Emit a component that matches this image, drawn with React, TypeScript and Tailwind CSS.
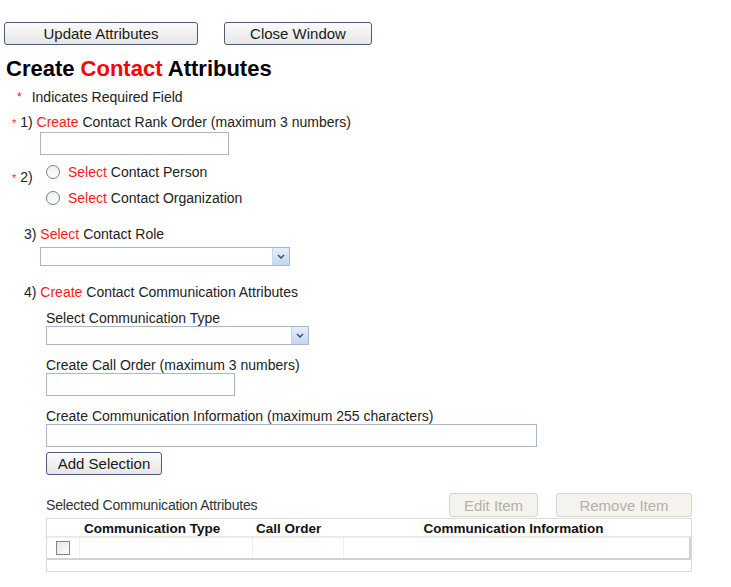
import React from "react";

const btn =
  "h-[23px] rounded-[3px] border border-[#4a5d75] bg-gradient-to-b from-[#fbfbfb] to-[#e6e6e6] text-[15px] text-[#1a1a1a] leading-none";
const disabledBtn =
  "h-[24px] rounded-[3px] border border-[#d8d4c8] bg-[#f4f3ee] text-[15px] text-[#b4b0a8] leading-none";
const input = "h-[23px] border border-[#a9b8c9] bg-white";

function Red({ children }: { children: React.ReactNode }) {
  return <span className="text-[#ff1a1a]">{children}</span>;
}

function Select({ w }: { w: string }) {
  return (
    <div className={`${w} h-[19px] border border-[#a9b8c9] bg-white flex justify-end`}>
      <div className="w-[17px] h-full bg-gradient-to-b from-[#e6eefc] to-[#c5d6f3] border-l border-[#c9d6ea] flex items-center justify-center">
        <svg width="8" height="5" viewBox="0 0 8 5">
          <path d="M1 1 L4 4 L7 1" fill="none" stroke="#3d4f6e" strokeWidth="1.5" />
        </svg>
      </div>
    </div>
  );
}

function Radio() {
  return (
    <span className="inline-block w-[14px] h-[14px] rounded-full border border-[#6b7f96] bg-gradient-to-b from-[#f0f0f0] to-white" />
  );
}

export default function App() {
  return (
    <div className="w-[731px] h-[587px] bg-white text-[#222] text-[14px] font-['Liberation_Sans',Arial,sans-serif]">
      <div className="flex pt-[22px] pl-[4px] gap-[26px]">
        <button className={`${btn} w-[194px]`}>Update Attributes</button>
        <button className={`${btn} w-[148px]`}>Close Window</button>
      </div>

      <h1 className="mt-[12px] ml-[6px] text-[22px] font-bold text-black leading-[24px]">
        Create <span className="text-[#ff0000]">Contact</span> Attributes
      </h1>

      <div className="mt-[8px] ml-[17px] flex gap-[10px] leading-[16px]">
        <span className="text-[#ff1a1a] text-[12px]">*</span>
        <span>Indicates Required Field</span>
      </div>

      <div className="mt-[9px] ml-[12px] leading-[16px]">
        <span className="text-[#ff1a1a] text-[11px]">*</span> 1) <Red>Create</Red> Contact Rank Order (maximum 3 numbers)
      </div>
      <div className={`${input} ml-[40px] mt-[1px] w-[189px]`} />

      <div className="mt-[9px] ml-[12px] flex">
        <span className="w-[34px] mt-[5px] leading-[16px]">
          <span className="text-[#ff1a1a] text-[11px]">*</span> 2)
        </span>
        <div className="flex flex-col gap-[10px]">
          <div className="flex items-center gap-[8px] leading-[16px]">
            <Radio />
            <span>
              <Red>Select</Red> Contact Person
            </span>
          </div>
          <div className="flex items-center gap-[8px] leading-[16px]">
            <Radio />
            <span>
              <Red>Select</Red> Contact Organization
            </span>
          </div>
        </div>
      </div>

      <div className="mt-[20px] ml-[24px] leading-[16px]">
        3) <Red>Select</Red> Contact Role
      </div>
      <div className="ml-[40px] mt-[5px]">
        <Select w="w-[250px]" />
      </div>

      <div className="mt-[18px] ml-[24px] leading-[16px]">
        4) <Red>Create</Red> Contact Communication Attributes
      </div>

      <div className="ml-[46px]">
        <div className="mt-[10px] leading-[16px]">Select Communication Type</div>
        <Select w="w-[263px]" />

        <div className="mt-[12px] leading-[16px]">Create Call Order (maximum 3 numbers)</div>
        <div className={`${input} w-[189px]`} />

        <div className="mt-[12px] leading-[16px]">Create Communication Information (maximum 255 characters)</div>
        <div className={`${input} w-[491px]`} />

        <button className={`${btn} mt-[5px] w-[116px]`}>Add Selection</button>

        <div className="mt-[18px] flex items-end w-[646px]">
          <span className="flex-1 pb-[4px] leading-[16px] text-[#333] tracking-[-0.2px]">Selected Communication Attributes</span>
          <button className={`${disabledBtn} w-[89px]`}>Edit Item</button>
          <button className={`${disabledBtn} w-[136px] ml-[18px]`}>Remove Item</button>
        </div>

        <div className="mt-[1px] w-[646px] border border-[#dcdad2] bg-white">
          <div className="grid grid-cols-[33px_173px_91px_1fr] h-[18px] items-center font-bold text-[13.5px] text-[#111] border-b border-[#e9e7e0]">
            <span />
            <span className="pl-[4px]">Communication Type</span>
            <span className="pl-[3px]">Call Order</span>
            <span className="text-center pr-[8px]">Communication Information</span>
          </div>
          <div className="grid grid-cols-[33px_173px_91px_1fr] h-[23px] border-t border-[#efeee9] border-b-2 border-b-[#d4d2cc] border-r-2 border-r-[#d4d2cc]">
            <span className="flex items-center justify-center border-r border-[#efeee9]">
              <span className="w-[14px] h-[14px] border border-[#7a8796] bg-gradient-to-br from-[#e6e6e6] to-white" />
            </span>
            <span className="border-r border-[#efeee9]" />
            <span className="border-r border-[#efeee9]" />
            <span />
          </div>
          <div className="h-[11px]" />
        </div>
      </div>
    </div>
  );
}
